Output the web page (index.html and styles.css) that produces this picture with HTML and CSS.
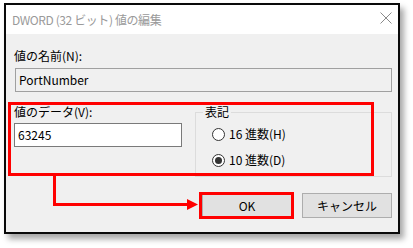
FILE: index.html
```html
<!DOCTYPE html>
<html lang="ja">
<head>
<meta charset="utf-8">
<link rel="stylesheet" href="styles.css">
</head>
<body>
<div class="stage">
  <div class="dialog">
    <div class="titlebar">
      <span class="title">DWORD (32 ビット) 値の編集</span>
      <svg class="close" width="12" height="12" viewBox="0 0 12 12"><path d="M0.5 0.5 L11.5 11.5 M11.5 0.5 L0.5 11.5" stroke="#8a8a8a" stroke-width="1" fill="none"/></svg>
    </div>
    <div class="body">
      <div class="label">値の名前(N):</div>
      <div class="field readonly">PortNumber</div>
      <div class="datarow">
        <div class="datacol">
          <div class="label">値のデータ(V):</div>
          <div class="field data">63245</div>
        </div>
        <fieldset class="group">
          <legend>表記</legend>
          <div class="radio first"><span class="dot"></span>16 進数(H)</div>
          <div class="radio checked"><span class="dot"></span>10 進数(D)</div>
        </fieldset>
      </div>
      <div class="buttons">
        <div class="btn">OK</div>
        <div class="btn">キャンセル</div>
      </div>
    </div>
  </div>
  <div class="mark box-data"></div>
  <div class="mark box-ok"></div>
  <svg class="arrow" width="413" height="248" viewBox="0 0 413 248">
    <polyline points="54.5,176 54.5,204.5 189,204.5" fill="none" stroke="#ff0000" stroke-width="3"/>
    <polygon points="187,199 198,204.5 187,210" fill="#ff0000"/>
  </svg>
</div>
</body>
</html>
```
FILE: styles.css
```css
html, body {
  margin: 0;
  padding: 0;
  background: #ffffff;
}
.stage {
  position: relative;
  width: 413px;
  height: 248px;
  padding: 3px 0 0 4px;
  box-sizing: border-box;
  font-family: "Noto Sans CJK JP", "Noto Sans", sans-serif;
  font-size: 12px;
  color: #000;
}
.dialog {
  width: 396px;
  height: 231px;
  box-sizing: border-box;
  border: 2px solid #0a0a0a;
  background: #f0f0f0;
  box-shadow: 4px 5px 6px rgba(0,0,0,0.35);
  display: flex;
  flex-direction: column;
}
.titlebar {
  height: 29px;
  background: #ffffff;
  display: flex;
  align-items: center;
  padding-left: 6px;
}
.title {
  color: #9a9a9a;
  line-height: 16px;
  letter-spacing: -0.4px;
}
.close {
  margin-left: auto;
  margin-right: 6px;
  align-self: flex-start;
  margin-top: 7px;
}
.body {
  display: flex;
  flex-direction: column;
  padding: 14px 6px 0 8px;
}
.label {
  line-height: 16px;
}
.field {
  height: 24px;
  box-sizing: border-box;
  border: 1px solid #7a7a7a;
  background: #fff;
  line-height: 22px;
  padding-left: 3px;
  margin-top: 4px;
}
.field.readonly {
  margin-left: 1px;
  background: #f0f0f0;
  border-color: #a0a0a0;
}
.datarow {
  display: flex;
  align-items: flex-start;
  margin-top: 12px;
}
.datacol {
  width: 168px;
  display: flex;
  flex-direction: column;
}
.field.data {
  margin-top: 3px;
}
.group {
  flex: 1;
  margin: 0 0 0 13px;
  padding: 0 0 8px 0;
  border: 1px solid #dcdcdc;
  min-width: 0;
}
.group legend {
  margin-left: 7px;
  padding: 0 2px;
  line-height: 16px;
}
.radio {
  display: flex;
  align-items: center;
  height: 16px;
  line-height: 16px;
  margin-left: 16px;
  margin-top: 10px;
}
.radio.first {
  margin-top: 6px;
}
.dot {
  width: 13px;
  height: 13px;
  box-sizing: border-box;
  border: 1px solid #333;
  border-radius: 50%;
  background: #fff;
  margin-right: 4px;
  display: flex;
  align-items: center;
  justify-content: center;
}
.radio.checked .dot::after {
  content: "";
  width: 7px;
  height: 7px;
  border-radius: 50%;
  background: #333;
}
.buttons {
  display: flex;
  justify-content: flex-end;
  gap: 10px;
  margin-top: 16px;
}
.btn {
  width: 90px;
  height: 25px;
  box-sizing: border-box;
  border: 1px solid #adadad;
  background: #e1e1e1;
  display: flex;
  align-items: center;
  justify-content: center;
  line-height: 16px;
}
.mark {
  position: absolute;
  box-sizing: border-box;
  border: 3px solid #ff0000;
}
.box-data {
  left: 8px;
  top: 102px;
  width: 366px;
  height: 74px;
}
.box-ok {
  left: 199px;
  top: 192px;
  width: 95px;
  height: 27px;
}
.arrow {
  position: absolute;
  left: 0;
  top: 0;
  pointer-events: none;
}
```
